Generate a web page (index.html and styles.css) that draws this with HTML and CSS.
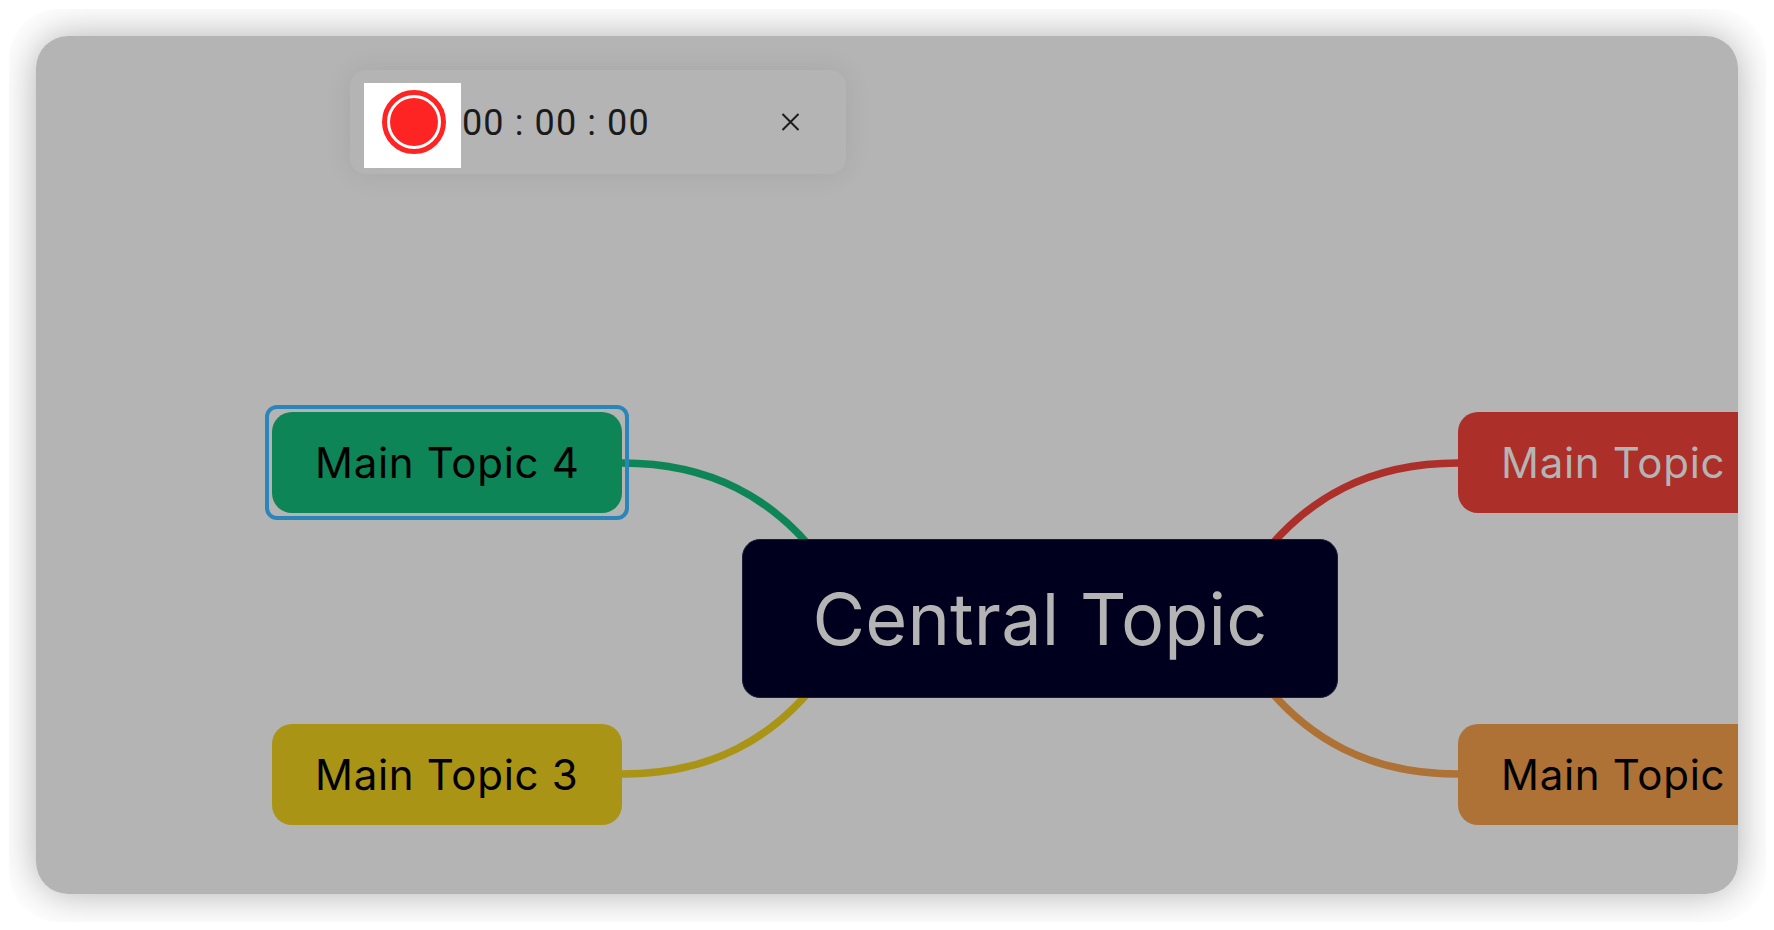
FILE: index.html
```html
<!DOCTYPE html>
<html lang="en">
<head>
<meta charset="utf-8">
<title>Mind map</title>
<link rel="stylesheet" href="styles.css">
</head>
<body>
<div class="frame">
  <main class="canvas">
    <svg class="links" width="1702" height="858" viewBox="0 0 1702 858" fill="none">
      <path class="link" stroke="#0e8557" d="M586 427C672 427 738 460 788 528"/>
      <path class="link" stroke="#aa9416" d="M586 738C672 738 738 705 788 637"/>
      <path class="link" stroke="#ad2f29" d="M1422 427C1336 427 1270 460 1220 528"/>
      <path class="link" stroke="#ae7136" d="M1422 738C1336 738 1270 705 1220 637"/>
    </svg>
    <div class="recorder">
      <div class="rec-box">
        <svg width="64" height="64" viewBox="0 0 64 64">
          <circle cx="32" cy="32" r="29.5" fill="none" stroke="#ff2424" stroke-width="5"/>
          <circle cx="32" cy="32" r="24" fill="#ff2424"/>
        </svg>
      </div>
      <span class="timer">00 : 00 : 00</span>
      <svg class="close" width="19" height="18" viewBox="0 0 19 18">
        <path d="M1.5 1L17.5 17M17.5 1L1.5 17" stroke="#1c1c1c" stroke-width="2" fill="none"/>
      </svg>
    </div>
    <div class="topic central">Central Topic</div>
    <div class="topic t4">Main Topic 4</div>
    <div class="selection"></div>
    <div class="topic t3">Main Topic 3</div>
    <div class="topic t1">Main Topic</div>
    <div class="topic t2">Main Topic</div>
  </main>
</div>
</body>
</html>
```
FILE: styles.css
```css
html, body { margin: 0; height: 100%; background: #fff; overflow: hidden; }
body { font-family: "Inter", "Noto Sans", sans-serif; }
.frame {
  position: relative;
  box-sizing: border-box;
  height: 913px;
  margin: 9px 8px 8px 9px;
  padding: 27px 28px 28px 27px;
  border-radius: 50px;
  overflow: hidden;
  display: flex;
}
.frame::before {
  content: "";
  position: absolute;
  inset: 27px 28px 28px 27px;
  border-radius: 32px;
  box-shadow: 0 0 40px rgba(0,0,0,.32);
}
.canvas {
  position: relative;
  flex: 1;
  background: #b4b4b4;
  border-radius: 32px;
  overflow: hidden;
}
.links { position: absolute; left: 0; top: 0; }
.link { stroke-width: 7.5; }
.recorder {
  position: absolute;
  left: 314px;
  top: 34px;
  width: 496px;
  height: 104px;
  box-sizing: border-box;
  padding: 13px 14px;
  display: flex;
  align-items: flex-start;
  background: #b4b4b4;
  border-radius: 16px;
  box-shadow: 0 0 28px rgba(0,0,0,.08);
}
.rec-box {
  box-sizing: border-box;
  width: 97px;
  height: 85px;
  padding: 7px 0 0 18px;
  background: #fff;
}
.rec-box svg { display: block; }
.timer {
  margin-left: 1px;
  font: 400 36px/80px "Roboto", sans-serif;
  color: #1a1a1a;
  letter-spacing: 1.1px;
}
.close { position: absolute; left: 431px; top: 43px; }
.topic {
  position: absolute;
  box-sizing: border-box;
  height: 101px;
  border-radius: 20px;
  display: flex;
  align-items: center;
  font-size: 42px;
  letter-spacing: .7px;
  white-space: nowrap;
  overflow: hidden;
  color: #000;
  padding-left: 43px;
}
.central {
  left: 706px; top: 503px; width: 596px; height: 159px;
  background: #00001e;
  border: 1px solid #1c1c38;
  color: #b4b4b4;
  font-size: 72px;
  letter-spacing: .2px;
  border-radius: 18px;
  justify-content: center;
  padding: 0;
}
.t4 { left: 236px; top: 376px; width: 350px; background: #0e8557; }
.t3 { left: 236px; top: 688px; width: 350px; background: #aa9416; }
.t1 { left: 1422px; top: 376px; width: 350px; background: #ad2f29; color: #b4b4b4; }
.t2 { left: 1422px; top: 688px; width: 350px; background: #ae7136; }
.selection {
  position: absolute;
  left: 229px; top: 369px;
  width: 364px; height: 115px;
  box-sizing: border-box;
  border: 4.5px solid #2a86b8;
  border-radius: 12px;
}
```
